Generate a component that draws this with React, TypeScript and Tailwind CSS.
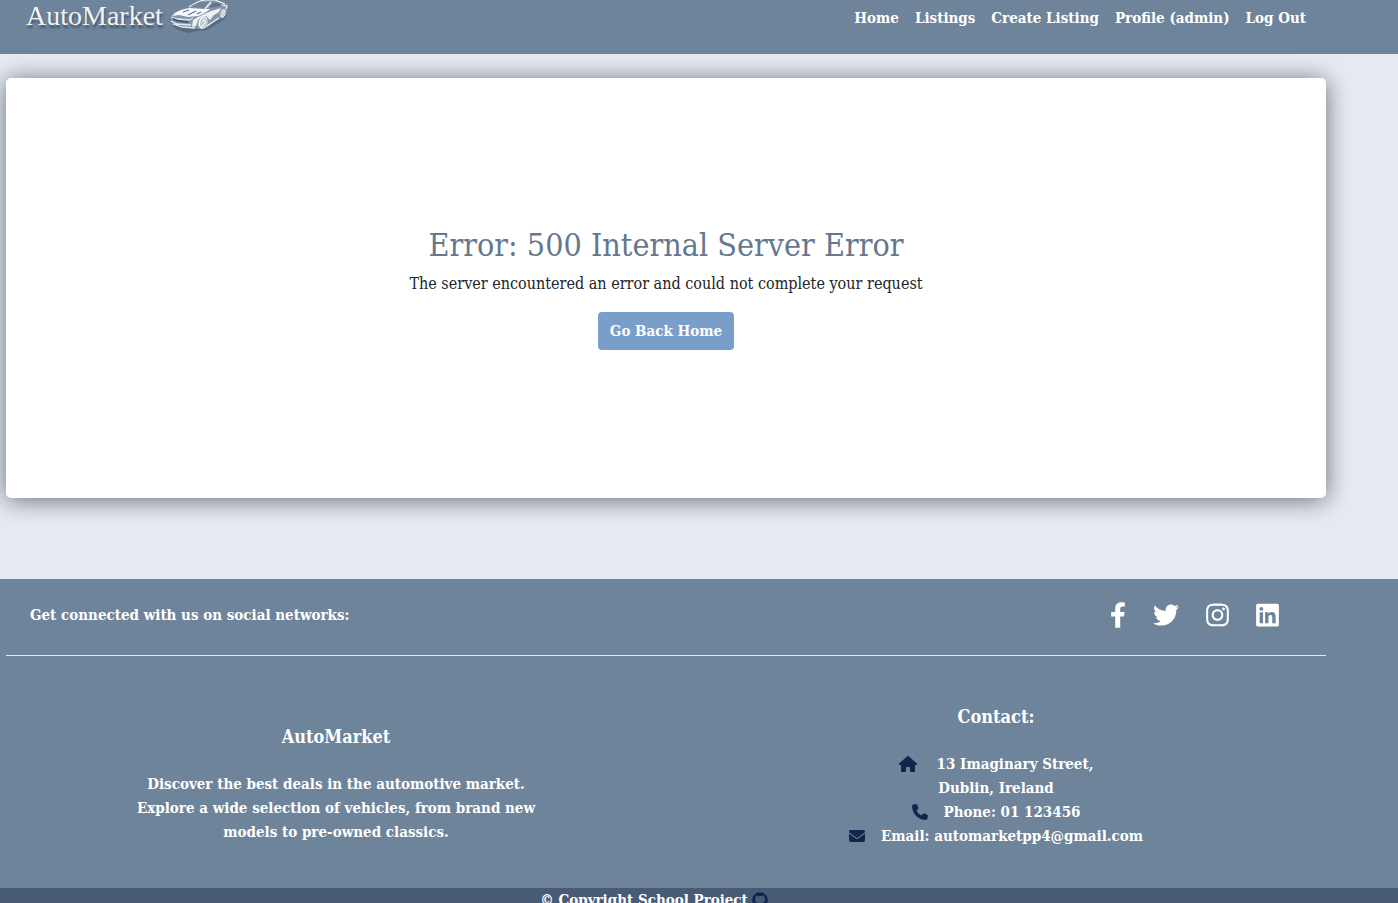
import React from "react";
import { FaFacebookF } from "react-icons/fa";
import { FaEnvelope, FaGithub, FaHouse, FaInstagram, FaLinkedin, FaPhone, FaTwitter } from "react-icons/fa6";

const navLinks = ["Home", "Listings", "Create Listing", "Profile (admin)", "Log Out"];

const socials = [
  { label: "Facebook", Icon: FaFacebookF, size: "h-[26px] w-4" },
  { label: "Twitter", Icon: FaTwitter, size: "h-[26px] w-[26px]" },
  { label: "Instagram", Icon: FaInstagram, size: "h-[26px] w-[23px]" },
  { label: "LinkedIn", Icon: FaLinkedin, size: "h-[26px] w-[23px]" },
];

function CarMark() {
  return (
    <svg viewBox="0 0 60 36" className="h-9 w-15" fill="none" aria-hidden="true">
      <path
        d="M3 22 L4 27 L12 31 L20 33 L28 31 L38 30 L48 24 L57 18 L58 14 L40 22 L28 27 Z"
        fill="#4b5f78"
        opacity="0.7"
      />
      <path
        d="M2 17 Q4 12 11 10 L20 7 Q28 1 35 0 L46 0 Q50 1 53 4 L57 4 L58 9 L57 15 L53 18 L44 21 L38 28 L30 29 L14 27 L4 24 L2 21 Z"
        fill="#8596aa"
      />
      <path d="M3 16 Q6 12 12 10 L20 8 L34 9 L41 9 Q37 13 29 16 L19 17 L10 15 Z" fill="#f6f7f9" />
      <path d="M29 17 L42 11 L52 8 L50 12 L45 15 L41 20 L37 16 L32 17 L29 20 L27 26 L23 27 L24 20 Z" fill="#eef1f4" />
      <path d="M21 7 L29 2 L40 2 L35 8 Z" fill="#71859c" />
      <path d="M40 8 L44 3 L50 3 L52 6 Z" fill="#60758d" />
      <path d="M20 7 Q28 1 36 0 L46 0 Q51 2 56 4 M36 9 L42 2" stroke="#f8f9fa" strokeWidth="1.2" />
      <path d="M14 12 L20 10 M19 15 L27 11 M28 14 L32 12" stroke="#63778f" strokeWidth="1.3" />
      <path d="M2 17 L9 19 L20 20 L24 18 M2 21 L8 24 L22 25 M4 24 L13 27 L26 28" stroke="#e3e8ec" strokeWidth="1.3" />
      <path d="M4 18 L9 20 L20 21 L19 23 L9 22 L4 20 Z" fill="#475b74" />
      <ellipse cx="34" cy="22.5" rx="4.4" ry="6.4" transform="rotate(15 34 22.5)" fill="#f6f7f9" />
      <ellipse cx="34.5" cy="22.5" rx="2.6" ry="4.4" transform="rotate(15 34.5 22.5)" stroke="#9aa9ba" strokeWidth="0.8" />
      <path d="M32 20 L36 25 M36 19 L32 26" stroke="#9aa9ba" strokeWidth="0.7" />
      <ellipse cx="54" cy="13.5" rx="2.4" ry="4.4" transform="rotate(15 54 13.5)" fill="#f0f2f5" />
      <ellipse cx="54" cy="13.5" rx="1.1" ry="2.7" transform="rotate(15 54 13.5)" stroke="#9aa9ba" strokeWidth="0.7" />
      <path d="M38 26 L50 18 M53 5 L58 6 L57 9" stroke="#f4f6f8" strokeWidth="1.2" />
    </svg>
  );
}

export default function App() {
  return (
    <div className="min-h-screen bg-[#e5eaf3] font-['Roboto_Slab','DejaVu_Serif_Condensed','DejaVu_Serif',serif] text-[16px] leading-6 text-[#212529]">
      <header className="flex h-[54px] items-start justify-between bg-[#6e849b] pr-[92px] pl-[26px] font-bold text-white">
        <a href="#home" className="flex items-start gap-1.5">
          <span className="font-['Liberation_Serif',serif] text-[28px] leading-8 font-normal text-[#f1f3f5] [text-shadow:1px_3px_2px_#43566d]">
            AutoMarket
          </span>
          <CarMark />
        </a>
        <nav className="flex gap-4 pt-1.5 text-[15px]">
          {navLinks.map((label) => (
            <a key={label} href="#nav">
              {label}
            </a>
          ))}
        </nav>
      </header>

      <main className="pt-6 pr-[72px] pb-[81px] pl-1.5">
        <section className="flex min-h-[420px] flex-col items-center justify-center rounded-[5px] bg-white text-center shadow-[0_2px_24px_rgba(0,0,0,0.54)]">
          <h1 className="mb-2 text-[32px] leading-[38px] text-[#65788e]">Error: 500 Internal Server Error</h1>
          <p className="mb-4">The server encountered an error and could not complete your request</p>
          <button type="button" className="h-[38px] rounded-[4px] bg-[#7a9eca] px-3 text-[15px] font-bold text-white">
            Go Back Home
          </button>
        </section>
      </main>

      <footer className="bg-[#6e849b] text-[15px] font-bold text-white">
        <div className="pr-[72px] pl-1.5">
          <div className="flex h-[77px] items-center justify-between border-b border-[#e5eaf3] px-6 pb-1">
            <span>Get connected with us on social networks:</span>
            <div className="flex items-center gap-[27px] pr-[23px]">
              {socials.map(({ label, Icon, size }) => (
                <a key={label} href="#social" aria-label={label}>
                  <Icon className={size} />
                </a>
              ))}
            </div>
          </div>
          <div className="grid grid-cols-2 pt-[49px] pb-10 text-center">
            <section className="flex flex-col items-center pt-5">
              <h2 className="mb-[23px] text-[18px]">AutoMarket</h2>
              <p className="w-[416px]">
                Discover the best deals in the automotive market. Explore a wide selection of vehicles, from brand
                new models to pre-owned classics.
              </p>
            </section>
            <section>
              <h2 className="mb-[23px] text-[18px]">Contact:</h2>
              <address className="not-italic">
                <p className="flex items-center justify-center gap-5">
                  <FaHouse className="h-4 w-[18px] text-[#12264d]" />
                  13 Imaginary Street,
                </p>
                <p>Dublin, Ireland</p>
                <p className="flex items-center justify-center gap-4">
                  <FaPhone className="h-4 w-4 text-[#12264d]" />
                  Phone: 01 123456
                </p>
                <p className="flex items-center justify-center gap-4">
                  <FaEnvelope className="h-4 w-4 text-[#12264d]" />
                  Email: automarketpp4@gmail.com
                </p>
              </address>
            </section>
          </div>
        </div>
        <div className="flex items-center justify-center gap-1 bg-[#475b75] pr-[90px]">
          <span>© Copyright School Project</span>
          <a href="#github" aria-label="GitHub" className="text-[#12264d]">
            <FaGithub className="h-4 w-4" />
          </a>
        </div>
      </footer>
    </div>
  );
}
